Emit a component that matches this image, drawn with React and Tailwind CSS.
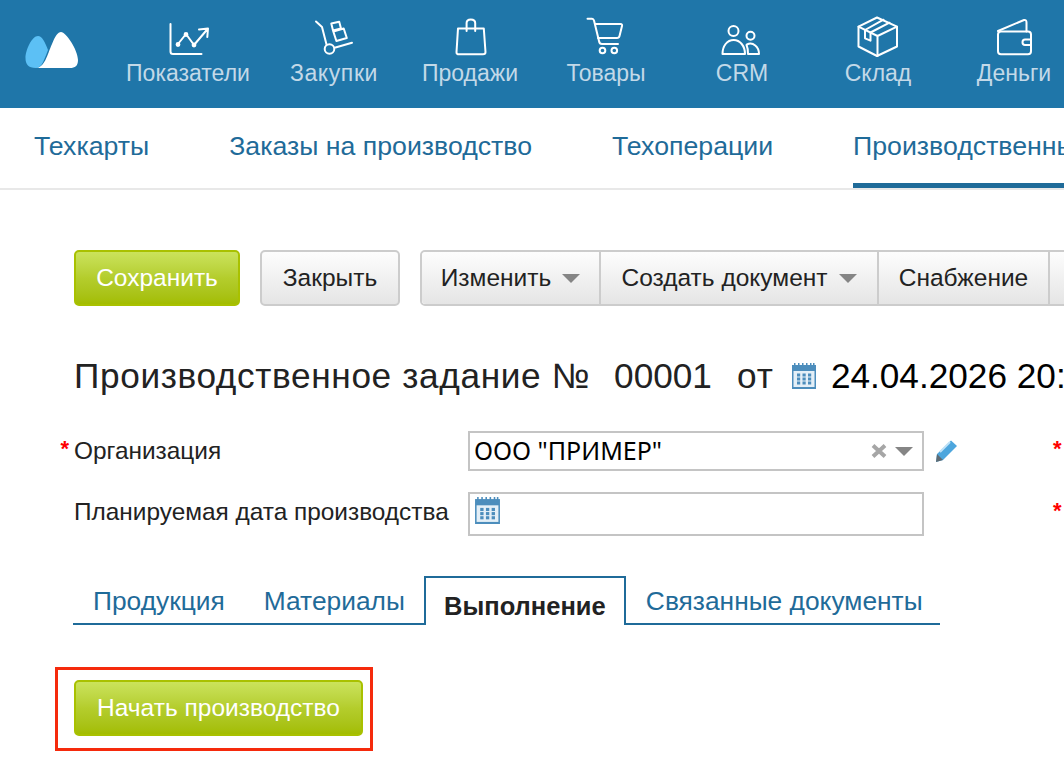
import React from "react";

const s = { fill: "none", stroke: "#fff", strokeWidth: 2, strokeLinecap: "round", strokeLinejoin: "round" };

const Ic = ({ cx, children }) => (
  <svg width="60" height="44" viewBox={`${cx - 30} 14 60 44`} {...s}>{children}</svg>
);

const items = [
  { label: "Показатели", w: "w-[156px]", cx: 188, icon: <>
    <path d="M170.5 24V51.5Q170.5 54 173 54H201.5" />
    <path d="M178 44L186 34L194 45L208 28.5M199 29.5L208 28.5L207.3 37" />
    <circle cx="178" cy="44.5" r="1.4" fill="#fff" /><circle cx="186" cy="34.5" r="1.4" fill="#fff" /><circle cx="194" cy="45" r="1.4" fill="#fff" />
  </> },
  { label: "Закупки", w: "w-[136px]", ls: "tracking-[0.6px]", cx: 334, icon: <>
    <path d="M316 21.5L322 27L326.5 44.5" />
    <circle cx="329.5" cy="49" r="4.8" />
    <path d="M335.5 47.5L352 42.7" />
    <path d="M331.3 23.5L339.2 21.7L341 28.5L333 30.5Z" />
    <path d="M333.3 31.5L343.7 28.5L346.8 38L336.4 41Z" />
  </> },
  { label: "Продажи", w: "w-[136px]", cx: 470, icon: <>
    <path d="M458 28.5H483.8L485.5 52Q485.5 54.3 483 54.3H459Q456.3 54.3 456.5 52Z" />
    <path d="M466.6 31V23Q466.6 19.5 470.8 19.5Q475.2 19.5 475.2 23V31" />
  </> },
  { label: "Товары", w: "w-[136px]", cx: 606, icon: <>
    <path d="M587.5 18.7H592Q593.5 18.7 594 20.5L599 41Q599.5 44 602 44H618" />
    <path d="M595 24H620.5Q622.5 24 622 26L619.5 36Q619 38 617 38H598" />
    <circle cx="602.5" cy="50.5" r="2.8" /><circle cx="614.3" cy="50.5" r="2.8" />
  </> },
  { label: "CRM", w: "w-[136px]", cx: 742, icon: <>
    <circle cx="733.5" cy="31" r="5" />
    <path d="M722.5 54H745C745 46 740 40 733.7 40C727 40 722.5 46 722.5 54Z" />
    <circle cx="750.5" cy="35.7" r="4" />
    <path d="M747 44.5C753 41.5 759 47 759 54H748C748 51 747.7 47.5 746.5 45" />
  </> },
  { label: "Склад", w: "w-[136px]", cx: 878, icon: <>
    <path d="M877 17.5L897 26.7V46.5L877 56L858.5 46.5V26.7Z" />
    <path d="M858.5 26.7L877.5 36L897 26.7M877.5 36V56" />
    <path d="M865 30L883.5 19.7M870.5 32.5L889.5 22.7M865 30V38.3L870.5 40.7V32.5" />
  </> },
  { label: "Деньги", w: "w-[136px]", cx: 1014, icon: <>
    <rect x="998" y="31.5" width="33" height="22.8" rx="3" />
    <path d="M998 31L1024 20Q1026.5 19.5 1026.5 22.5V31.5" />
    <path d="M1031 39.5H1025Q1022.5 39.5 1022.5 42.2Q1022.5 45 1025 45H1031" />
  </> },
];

const Calendar = ({ size = 24 }) => (
  <svg width={size} height={size + 2} viewBox="0 0 24 26">
    <path d="M2 0h1.5v3H2zM6 0h1.5v3H6zM10 0h1.5v3H10zM14 0h1.5v3H14zM18 0h1.5v3H18zM21 0h1.5v3H21z" fill="#4c8dbc" />
    <rect x="0" y="2" width="24" height="24" fill="#4c8dbc" />
    <rect x="1.5" y="8" width="21" height="16" fill="#e4eff7" />
    {[5, 10.5, 16].map((x) => [10.5, 14.5, 18.5].map((y) => (
      <rect key={`${x}-${y}`} x={x} y={y} width="3.2" height="3" fill="#4c8dbc" />
    )))}
  </svg>
);

const Caret = () => (
  <svg width="18" height="9" viewBox="0 0 18 9" className="shrink-0"><path d="M0 0H18L9 9Z" fill="#858585" /></svg>
);

const greenBtn = "flex items-center justify-center shrink-0 rounded-[5px] border-2 border-[#a9c100] bg-gradient-to-b from-[#cbe35b] via-[#b4cd2c] to-[#a3bd00] text-white text-[24.5px] h-[56px]";
const grayBtn = "flex items-center justify-center shrink-0 bg-gradient-to-b from-[#fdfdfd] to-[#e5e5e5] text-[#222] text-[24.5px]";

const Star = () => <span className="text-[#f00] text-[22px] font-bold leading-none">*</span>;

export default function App() {
  return (
    <div className="w-[1064px] h-[768px] overflow-hidden bg-white font-['Liberation_Sans',Arial,sans-serif]">
      <header className="h-[108px] bg-[#1f76a9] flex">
        <div className="w-[110px] shrink-0 pl-[25px] pt-[31px]">
          <svg width="54" height="38" viewBox="25 31 54 38">
            <path d="M35 68C45 68 47 55 52 44C55 36 58 32 61 32C66 32 78 50 78 60C78 66 75 68 70 68Z" fill="#fff" />
            <path d="M36 68C28 68 25.5 64 25.5 58C25.5 50 32 36 38 36C42 36 45 42 48 50C44 60 42 68 36 68Z" fill="#5cc0f5" />
          </svg>
        </div>
        {items.map((it) => (
          <div key={it.label} className={`${it.w} shrink-0 flex flex-col items-center pt-[14px]`}>
            <Ic cx={it.cx}>{it.icon}</Ic>
            <span className={`text-[23px] leading-[30px] text-[#c3d9e8] whitespace-nowrap ${it.ls || ""}`}>{it.label}</span>
          </div>
        ))}
      </header>

      <nav className="h-[82px] border-b-2 border-[#e8e8e8] flex gap-[80px] pl-[34px] text-[26.7px] text-[#1f6b99] whitespace-nowrap">
        <div className="h-[80px] flex items-center -mt-[2px]">Техкарты</div>
        <div className="h-[80px] flex items-center -mt-[2px]">Заказы на производство</div>
        <div className="h-[80px] flex items-center -mt-[2px]">Техоперации</div>
        <div className="h-[80px] relative flex items-center -mt-[2px] after:content-[''] after:absolute after:left-0 after:right-0 after:bottom-[-2px] after:h-[5px] after:bg-[#1f6b99]">Производственные задания</div>
      </nav>

      <div className="flex pl-[74px] pt-[60px] whitespace-nowrap">
        <button className={`${greenBtn} w-[166px]`}>Сохранить</button>
        <button className={`${grayBtn} ml-[20px] w-[140px] h-[56px] rounded-[5px] border-2 border-[#ccc]`}>Закрыть</button>
        <div className="ml-[20px] flex h-[56px] w-[700px] shrink-0 rounded-l-[5px] border-2 border-[#ccc]">
          <button className={`${grayBtn} w-[179px] gap-[11px] border-r-2 border-[#ccc] rounded-l-[4px]`}>Изменить <Caret /></button>
          <button className={`${grayBtn} w-[278px] gap-[11px] border-r-2 border-[#ccc]`}>Создать документ <Caret /></button>
          <button className={`${grayBtn} w-[171px] border-r-2 border-[#ccc]`}>Снабжение</button>
          <button className={`${grayBtn} flex-1`}></button>
        </div>
      </div>

      <div className="flex items-center pl-[74px] mt-[46px] h-[48px] text-[35.2px] text-[#222] whitespace-nowrap">
        <span className="tracking-[0.65px]">Производственное задание №</span>
        <span className="ml-[24px]">00001</span>
        <span className="ml-[25px] tracking-[1px]">от</span>
        <span className="ml-[18px] mr-[15px]"><Calendar /></span>
        <span className="text-black">24.04.2026 20:00</span>
      </div>

      <div className="flex items-center mt-[31px] h-[40px] text-[24.4px] text-[#222]">
        <div className="w-[74px] pr-[5px] text-right shrink-0 h-[20px] -mt-[22px]"><Star /></div>
        <div className="w-[394px] shrink-0">Организация</div>
        <div className="w-[456px] h-[40px] shrink-0 border-2 border-[#c4c4c4] flex items-center pl-[4px] pr-[9px] font-['Noto_Sans',sans-serif] text-[25px] text-black">
          <span className="flex-1">ООО "ПРИМЕР"</span>
          <svg width="16" height="14" viewBox="0 0 16 14" className="mr-[8px]"><path d="M2 1.5L14 12.5M14 1.5L2 12.5" stroke="#a6a6a6" strokeWidth="4" /></svg>
          <Caret />
        </div>
        <svg width="24" height="24" viewBox="0 0 24 24" className="ml-[10px] shrink-0">
          <path d="M17 1.5L23 7L9 21L2 23L3 15Z" fill="#4da6dd" />
          <path d="M3 15L9 21L2 23Z" fill="#5f6b73" />
          <path d="M6 13L16 3" stroke="#bfe2f7" strokeWidth="2" />
        </svg>
        <div className="ml-[95px] h-[20px] -mt-[22px]"><Star /></div>
      </div>

      <div className="flex mt-[21px] h-[44px] text-[24.4px] text-[#222]">
        <div className="w-[74px] shrink-0"></div>
        <div className="w-[394px] shrink-0 leading-[40px]">Планируемая дата производства</div>
        <div className="w-[456px] h-[44px] shrink-0 border-2 border-[#c4c4c4] pl-[5px] pt-[3px]"><Calendar size={25} /></div>
        <div className="ml-[129px]"><Star /></div>
      </div>

      <div className="ml-[73px] mt-[40px] w-[867px] h-[49px] flex border-b-2 border-[#1f6b99] text-[26.35px] text-[#1f6b99] whitespace-nowrap">
        <div className="pl-[20px] pt-[6px]">Продукция</div>
        <div className="pl-[39px] pt-[6px]">Материалы</div>
        <div className="ml-[19px] w-[202px] h-[49px] border-2 border-b-0 border-[#1f6b99] bg-white flex items-center justify-center pt-[9px] font-bold text-[25.5px] text-[#222]">Выполнение</div>
        <div className="pl-[20px] pt-[6px]">Связанные документы</div>
      </div>

      <div className="ml-[55px] mt-[42px] w-[318px] h-[84px] border-[3px] border-[#f52a0c] pl-[16px] pt-[10px]">
        <button className={`${greenBtn} w-[289px]`}>Начать производство</button>
      </div>
    </div>
  );
}
